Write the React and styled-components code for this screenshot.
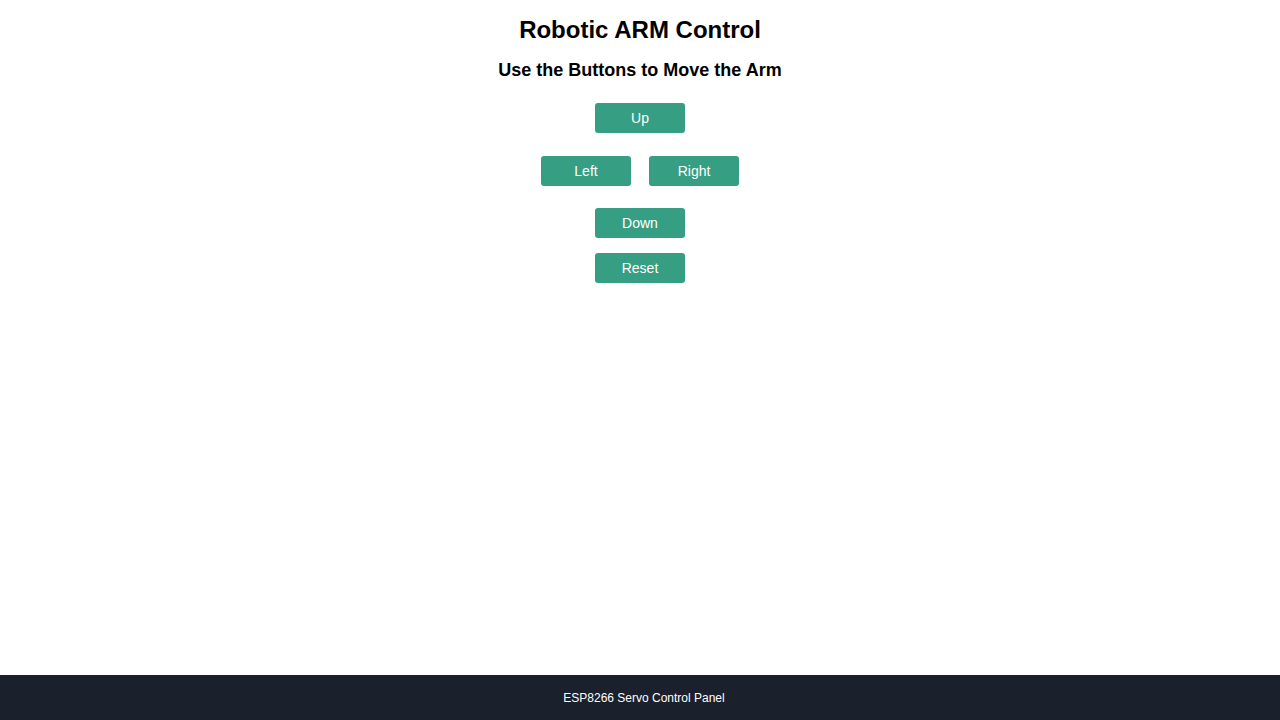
import React from "react";
import styled, { createGlobalStyle } from "styled-components";

const GlobalStyle = createGlobalStyle`
  body {
    margin: 0;
    font-family: "Liberation Sans", Arial, sans-serif;
    background: #ffffff;
    color: #000000;
  }
`;

function App() {
  const move = (dir) => {
    console.log(dir);
  };

  return (
    <Page>
      <GlobalStyle />
      <Main>
        <Title>Robotic ARM Control</Title>
        <Subtitle>Use the Buttons to Move the Arm</Subtitle>
        <Row $top={22}>
          <ArmButton onClick={() => move("up")}>Up</ArmButton>
        </Row>
        <Row $top={23}>
          <ArmButton onClick={() => move("left")}>Left</ArmButton>
          <ArmButton onClick={() => move("right")}>Right</ArmButton>
        </Row>
        <Row $top={22}>
          <ArmButton onClick={() => move("down")}>Down</ArmButton>
        </Row>
        <Row $top={15}>
          <ArmButton onClick={() => move("reset")}>Reset</ArmButton>
        </Row>
      </Main>
      <Footer>ESP8266 Servo Control Panel</Footer>
    </Page>
  );
}

export default App;

const Page = styled.div`
  display: flex;
  flex-direction: column;
  min-height: 100vh;
`;
const Main = styled.main`
  flex: 1;
  display: flex;
  flex-direction: column;
  align-items: center;
  padding-top: 16px;
`;
const Title = styled.h1`
  margin: 0;
  font-size: 24px;
  line-height: 28px;
  font-weight: 700;
`;
const Subtitle = styled.h3`
  margin: 16px 0 0;
  font-size: 18px;
  line-height: 21px;
  font-weight: 700;
`;
const Row = styled.div`
  display: flex;
  gap: 18px;
  margin-top: ${(p) => p.$top}px;
`;
const ArmButton = styled.button`
  width: 90px;
  height: 30px;
  border: none;
  border-radius: 3px;
  background: #369e82;
  color: #ffffff;
  font-family: "Liberation Sans", Arial, sans-serif;
  font-size: 14px;
  cursor: pointer;
`;
const Footer = styled.footer`
  height: 45px;
  display: flex;
  align-items: center;
  justify-content: center;
  padding-left: 8px;
  background: #1a202c;
  color: #ffffff;
  font-size: 12px;
`;
